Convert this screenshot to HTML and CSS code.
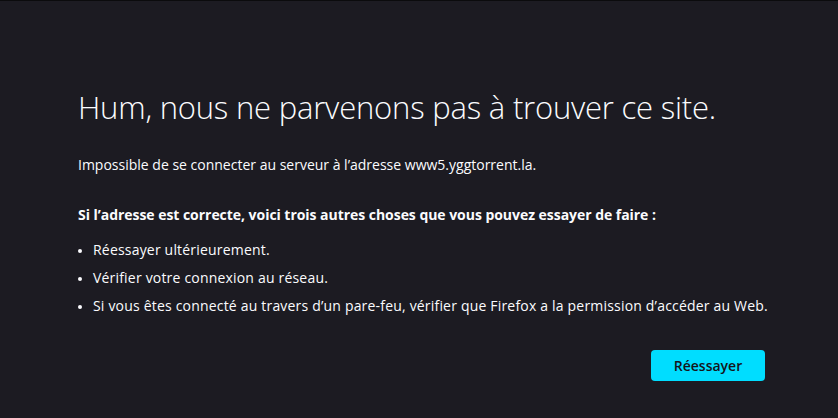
FILE: index.html
```html
<!DOCTYPE html>
<html lang="fr">
<head>
<meta charset="utf-8">
<title>Problème de chargement de la page</title>
<link rel="stylesheet" href="styles.css">
</head>
<body>
<div class="topline"></div>
<main class="container">
  <h1 class="title">Hum, nous ne parvenons pas à trouver ce site.</h1>
  <p class="desc">Impossible de se connecter au serveur à l’adresse www5.yggtorrent.la.</p>
  <p class="lead">Si l’adresse est correcte, voici trois autres choses que vous pouvez essayer de faire :</p>
  <ul class="list">
    <li>Réessayer ultérieurement.</li>
    <li>Vérifier votre connexion au réseau.</li>
    <li>Si vous êtes connecté au travers d’un pare-feu, vérifier que Firefox a la permission d’accéder au Web.</li>
  </ul>
  <div class="actions">
    <button class="retry">Réessayer</button>
  </div>
</main>
</body>
</html>
```
FILE: styles.css
```css
html, body {
  margin: 0;
  padding: 0;
  background: #1c1b22;
  height: 100%;
}
body {
  font-family: "Open Sans", "Noto Sans", sans-serif;
  color: #fbfbfe;
  font-size: 14px;
}
.topline {
  height: 1px;
  background: #0b0b0d;
}
.container {
  width: 687px;
  padding: 0 0 0 78px;
  box-sizing: content-box;
}
.title {
  margin: 0;
  padding-top: 84px;
  font-size: 31px;
  font-weight: 300;
  line-height: 44px;
  letter-spacing: -0.2px;
}
.desc {
  margin: 25px 0 0;
  line-height: 22px;
}
.lead {
  margin: 28px 0 0;
  font-weight: 700;
  line-height: 22px;
  letter-spacing: -0.04px;
}
.list {
  margin: 13px 0 0;
  padding-left: 15px;
  letter-spacing: 0.19px;
}
.list li {
  line-height: 22px;
  margin-bottom: 6px;
  white-space: nowrap;
}
.list li::marker {
  font-size: 12px;
}
.actions {
  display: flex;
  justify-content: flex-end;
  margin-top: 33px;
}
.retry {
  width: 114px;
  height: 31px;
  border: none;
  border-radius: 4px;
  background: #00ddff;
  color: #15141a;
  font-family: "Open Sans", "Noto Sans", sans-serif;
  font-size: 14px;
  font-weight: 600;
}
```
